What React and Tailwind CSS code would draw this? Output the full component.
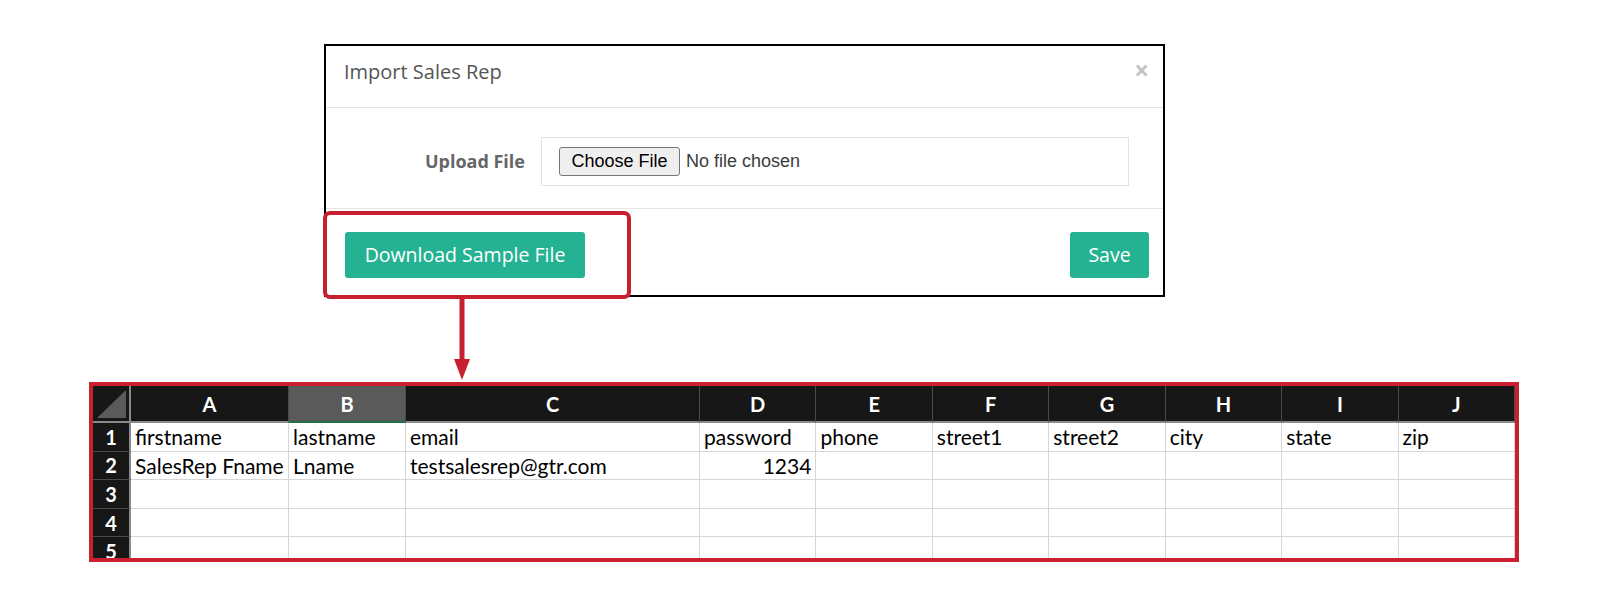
import React from 'react';

const cols = ['A', 'B', 'C', 'D', 'E', 'F', 'G', 'H', 'I', 'J'];

const rows = [
  ['firstname', 'lastname', 'email', 'password', 'phone', 'street1', 'street2', 'city', 'state', 'zip'],
  ['SalesRep Fname', 'Lname', 'testsalesrep@gtr.com', '1234', '', '', '', '', '', ''],
  ['', '', '', '', '', '', '', '', '', ''],
  ['', '', '', '', '', '', '', '', '', ''],
  ['', '', '', '', '', '', '', '', '', ''],
];

function ImportModal() {
  return (
    <div className="ml-[324px] mt-[44px] w-[841px] border-2 border-black bg-white font-['Open_Sans',sans-serif]">
      {/* Header */}
      <div className="h-[62px] border-b border-[#e5e5e5] flex items-start justify-between pl-[18px] pr-[14px] pt-[12px]">
        <h4 className="text-[20px] leading-[28px] text-[#555]">Import Sales Rep</h4>
        <span className="text-[26px] leading-[20px] font-bold text-[#c4c4c4] mt-[2px]">×</span>
      </div>

      {/* Body */}
      <div className="flex items-center pt-[29px] pb-[22px] border-b border-[#e5e5e5]">
        <label className="w-[199px] text-right text-[18px] font-bold text-[#666]">Upload File</label>
        <div className="ml-[16px] w-[588px] h-[49px] border border-[#e3e3e3] flex items-center pl-[17px] font-['Liberation_Sans',Arial,sans-serif]">
          <button className="h-[29px] w-[121px] border border-[#767676] rounded-[3px] bg-[#efefef] text-[18px] text-black">
            Choose File
          </button>
          <span className="ml-[6px] text-[18px] text-[#3c3c3c]">No file chosen</span>
        </div>
      </div>

      {/* Footer */}
      <div className="flex items-center justify-between pt-[23px] pb-[17px] pl-[19px] pr-[14px]">
        <button className="h-[46px] w-[240px] rounded-[3px] bg-[#25b292] text-white text-[19.5px]">
          Download Sample File
        </button>
        <button className="h-[46px] w-[79px] rounded-[3px] bg-[#25b292] text-white text-[19.5px]">
          Save
        </button>
      </div>
    </div>
  );
}

function Sheet() {
  return (
    <div className="ml-[89px] mt-[85px] w-[1430px] border-4 border-[#c8202f] bg-white font-['Lato',sans-serif]">
      <div className="h-[172px] overflow-hidden grid grid-cols-[38px_158px_117px_294px_repeat(7,1fr)] grid-rows-[37px_repeat(5,28.6px)]">
        {/* corner */}
        <div className="relative bg-[#171717] border-r-2 border-b-2 border-[#8a8a8a]">
          <svg className="absolute inset-0" width="36" height="35" viewBox="0 0 36 35">
            <polygon points="4,32 33,4 33,32" fill="#5a5a5a" />
          </svg>
        </div>
        {cols.map(c => (
          <div
            key={c}
            className={`flex items-center justify-center text-[20px] font-bold text-white border-r border-[#4a4a4a] ${c === 'B' ? 'bg-[#5a5a5a] border-b-2 border-b-[#217346]' : 'bg-[#171717] border-b-2 border-b-[#8a8a8a]'}`}
          >
            {c}
          </div>
        ))}

        {rows.map((r, i) => (
          <React.Fragment key={i}>
            <div className="flex items-center justify-center bg-[#171717] text-white text-[20px] font-bold border-r-2 border-[#8a8a8a] border-b border-b-[#4a4a4a]">
              {i + 1}
            </div>
            {r.map((v, j) => (
              <div
                key={j}
                className={`flex items-center px-[4px] text-[21px] text-black whitespace-nowrap overflow-hidden border-r border-b border-[#d6d6d6] ${v === '1234' ? 'justify-end' : ''}`}
              >
                {v}
              </div>
            ))}
          </React.Fragment>
        ))}
      </div>
    </div>
  );
}

export default function App() {
  return (
    <div className="relative w-[1600px] h-[607px] bg-white overflow-hidden">
      <ImportModal />
      <Sheet />

      {/* highlight around download button */}
      <div className="absolute left-[323px] top-[211px] w-[308px] h-[88px] border-4 border-[#c8202f] rounded-[7px]" />

      {/* arrow to sheet */}
      <svg className="absolute left-[452px] top-[298px]" width="20" height="84" viewBox="0 0 20 84">
        <rect x="7.5" y="0" width="5" height="64" fill="#c8202f" />
        <polygon points="2,61 18,61 10,82" fill="#c8202f" />
      </svg>
    </div>
  );
}
